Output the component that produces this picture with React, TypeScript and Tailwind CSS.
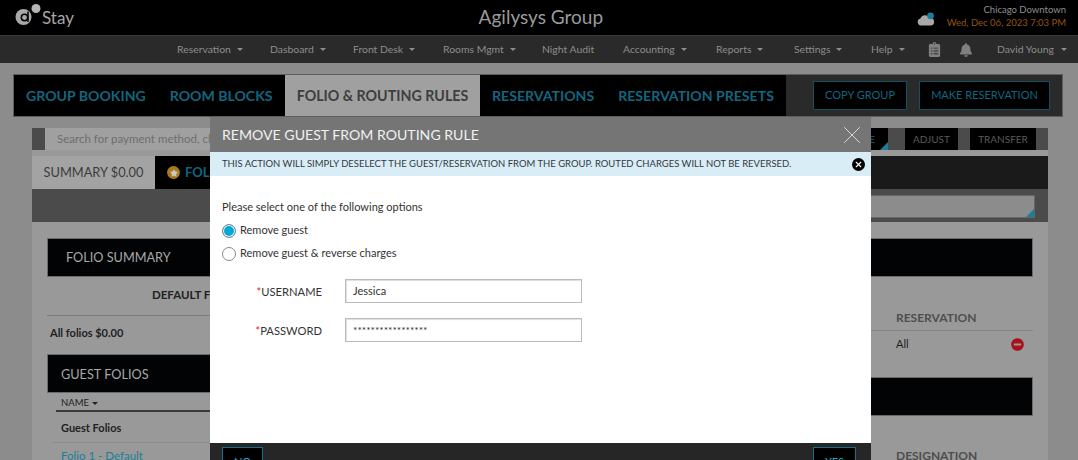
import { X } from "lucide-react";
import { FaBell, FaClipboardList, FaMinusCircle, FaStar } from "react-icons/fa";

const navItems = [
  { label: "Reservation", caret: true, width: "w-[93px]" },
  { label: "Dasboard", caret: true, width: "w-[83px]" },
  { label: "Front Desk", caret: true, width: "w-[90px]" },
  { label: "Rooms Mgmt", caret: true, width: "w-[99px]" },
  { label: "Night Audit", caret: false, width: "w-[81px]" },
  { label: "Accounting", caret: true, width: "w-[93px]" },
  { label: "Reports", caret: true, width: "w-[78px]" },
  { label: "Settings", caret: true, width: "w-[77px]" },
  { label: "Help", caret: true, width: "w-[56px]" },
];

function Caret({ className = "border-t-[#a0a0a0]" }: { className?: string }) {
  return <span className={`inline-block w-0 h-0 border-x-[3px] border-x-transparent border-t-[3px] ${className}`} />;
}

function Logo() {
  return (
    <svg width="27" height="30" viewBox="0 0 27 30" className="shrink-0">
      <circle cx="8.5" cy="14" r="8" fill="#a8a8a8" />
      <circle cx="9.5" cy="14.5" r="3.2" fill="none" stroke="#000" strokeWidth="1.5" />
      <path d="M13 8.5v10.5" stroke="#000" strokeWidth="1.5" />
      <circle cx="21" cy="5.5" r="4.5" fill="#b5b5b5" />
    </svg>
  );
}

function WeatherIcon() {
  return (
    <svg width="18" height="14" viewBox="0 0 18 14" className="shrink-0">
      <path d="M4 13.5a3.5 3.5 0 0 1-.6-6.9A5 5 0 0 1 12.6 6a3.8 3.8 0 0 1 1.4 7.5z" fill="#a8a8a8" />
      <circle cx="13.5" cy="3.8" r="3.4" fill="#1b7f9c" />
    </svg>
  );
}

function BlackBand({ title, className = "" }: { title?: string; className?: string }) {
  return (
    <div className={`h-[39px] shrink-0 bg-[#020305] border border-[#6a6a6a] flex items-center text-[#a8a8a8] text-[12.7px] ${className}`}>
      {title}
    </div>
  );
}

export default function App() {
  return (
    <div className="relative w-[1078px] h-[460px] overflow-hidden bg-[#8c8c8c] font-['Lato','Open_Sans',sans-serif]">
      {/* top header */}
      <header className="h-[36px] bg-black border-b border-[#3a3a3a] flex items-center pl-[15px] pr-[12px]">
        <div className="w-[330px] flex items-center text-[#a6a6a6] text-[17px]">
          <Logo />
          <span>Stay</span>
        </div>
        <div className="flex-1 text-center text-[#9a9a9a] text-[19px] pr-[180px]">Agilysys Group</div>
        <div className="mr-[12px] mt-[3px]">
          <WeatherIcon />
        </div>
        <div className="text-right text-[9.5px] leading-[13px] -mt-[4px]">
          <div className="text-[#8f8f8f]">Chicago Downtown</div>
          <div className="text-[#96540f]">Wed, Dec 06, 2023 7:03 PM</div>
        </div>
      </header>

      {/* main nav */}
      <nav className="h-[27px] bg-[#2a2a2a] flex items-center pl-[177px] text-[#8d8d8d] text-[10.4px]">
        {navItems.map((item) => (
          <div key={item.label} className={`${item.width} flex items-center gap-[6px] shrink-0`}>
            <span>{item.label}</span>
            {item.caret && <Caret className="border-t-[#8d8d8d]" />}
          </div>
        ))}
        <FaClipboardList className="text-[#808080] text-[15px] shrink-0" />
        <FaBell className="text-[#808080] text-[14px] ml-[17px] shrink-0" />
        <div className="flex items-center gap-[7px] ml-[24px] whitespace-nowrap">
          <span>David Young</span>
          <Caret className="border-t-[#8d8d8d]" />
        </div>
      </nav>

      {/* section tabs */}
      <div className="mt-[11px] ml-[13px] w-[1050px] h-[43px] flex border border-[#5c5c5c] bg-[#2a2a2a] whitespace-nowrap">
        <div className="w-[271px] bg-black flex items-center pl-[12px] gap-[24px] text-[#12667f] text-[14.1px] font-bold">
          <span>GROUP BOOKING</span>
          <span>ROOM BLOCKS</span>
        </div>
        <div className="w-[195px] bg-[#a0a0a0] flex items-center justify-center text-[#3e3e3e] text-[14.25px] font-bold">
          FOLIO &amp; ROUTING RULES
        </div>
        <div className="w-[306px] bg-black flex items-center pl-[12px] gap-[24px] text-[#12667f] text-[14.1px] font-bold">
          <span>RESERVATIONS</span>
          <span>RESERVATION PRESETS</span>
        </div>
        <div className="flex-1 flex items-center pl-[27px] gap-[12px] text-[#12667f] text-[11px]">
          <div className="w-[94px] h-[29px] bg-black border border-[#12505f] flex items-center justify-center">COPY GROUP</div>
          <div className="w-[131px] h-[29px] bg-black border border-[#12505f] flex items-center justify-center">MAKE RESERVATION</div>
        </div>
      </div>

      {/* folio panel */}
      <main className="ml-[32px] mt-[11px] w-[1016px] h-[340px] bg-[#999999] flex flex-col">
        <div className="h-[22px] bg-[#4b4b4b] flex pl-[13px] pr-[12px] shrink-0">
          <div className="w-[600px] bg-[#a0a0a0] text-[#6e6e6e] text-[11.5px] pl-[12px] flex items-center whitespace-nowrap overflow-hidden">
            Search for payment method, charge
          </div>
          <div className="ml-auto flex text-[#5a5a5a] text-[10px]">
            <div className="relative w-[68px] bg-black overflow-hidden flex items-center justify-end pr-[13px] text-[#12667f]">
              <span>CHARGE</span>
              <span className="absolute right-0 bottom-0 w-0 h-0 border-l-[8px] border-l-transparent border-b-[8px] border-b-[#1a7f9c]" />
            </div>
            <div className="ml-[17px] w-[53px] bg-black flex items-center justify-center">ADJUST</div>
            <div className="ml-[12px] w-[66px] bg-black flex items-center justify-center">TRANSFER</div>
          </div>
        </div>
        <div className="mt-[6px] h-[33px] flex bg-[#1a1a1a] shrink-0">
          <div className="w-[123px] bg-[#a3a3a3] text-[#3c3c3c] text-[12.8px] pt-[1px] flex items-center justify-center">SUMMARY $0.00</div>
          <div className="flex-1 bg-[#1a1a1a] flex items-center">
            <div className="w-[80px] h-full bg-black flex items-center pl-[12px] gap-[5px] text-[#12667f] text-[13px] font-bold">
              <span className="w-[13px] h-[13px] rounded-full bg-[#a87a1a] flex items-center justify-center shrink-0">
                <FaStar className="text-[#c9c9c9] text-[8px]" />
              </span>
              <span>FOLIO</span>
            </div>
          </div>
        </div>
        <div className="h-[33px] bg-[#4b4b4b] pt-[6px] pr-[13px] flex justify-end shrink-0">
          <div className="relative w-[400px] h-[23px] bg-[#8c8c8c] border border-[#666] overflow-hidden">
            <span className="absolute right-0 bottom-0 w-0 h-0 border-l-[8px] border-l-transparent border-b-[8px] border-b-[#1a7f9c]" />
          </div>
        </div>
        <div className="flex-1 px-[15px] pt-[16px] text-[#222] text-[11px] flex min-h-0">
          <div className="w-[400px] flex flex-col shrink-0">
            <BlackBand title="FOLIO SUMMARY" className="pl-[18px]" />
            <div className="h-[39px] shrink-0 flex items-center border-b border-[#7a7a7a] font-bold text-[11.5px] pl-[105px] pb-[2px]">DEFAULT FOLIO</div>
            <div className="h-[38px] shrink-0 flex items-start pt-[9px] pl-[3px] font-bold text-[11px]">All folios $0.00</div>
            <BlackBand title="GUEST FOLIOS" className="pl-[13px] pt-[3px]" />
            <div className="h-[19px] shrink-0 ml-[9px] border-b-2 border-[#3a3a3a] flex items-center gap-[3px] pl-[5px] pt-[4px] text-[9.5px] text-[#222]">
              NAME <Caret className="border-t-[#222]" />
            </div>
            <div className="h-[31px] shrink-0 ml-[5px] border-b border-[#8c8c8c] flex items-center pl-[9px] pt-[3px] font-bold text-[11px]">Guest Folios</div>
            <div className="h-[26px] shrink-0 ml-[5px] flex items-center pl-[9px] text-[#1c7f97] text-[11.5px]">Folio 1 - Default</div>
          </div>
          <div className="flex-1 flex flex-col">
            <BlackBand className="border-l-0" />
            <div className="h-[54px] shrink-0 border-b border-[#858585] flex items-end pb-[3px] pl-[449px] font-bold text-[12px] text-[#4e4e4e]">
              RESERVATION
            </div>
            <div className="h-[24px] shrink-0 flex items-center justify-between pl-[449px] pt-[3px] text-[11px]">
              <span>All</span>
              <FaMinusCircle className="text-[#a8111c] text-[13px] mr-[9px]" />
            </div>
            <BlackBand className="border-l-0 mt-[22px]" />
            <div className="h-[49px] shrink-0 flex items-end pl-[449px] font-bold text-[12px] text-[#4e4e4e]">DESIGNATION</div>
          </div>
        </div>
      </main>

      {/* modal */}
      <div className="absolute left-[210px] top-[117px] w-[661px] h-[360px] flex flex-col">
        <div className="h-[35px] bg-[#757575] flex items-center pl-[12px] pr-[4px] text-[#f0f0f0] text-[14.1px]">
          <span>REMOVE GUEST FROM ROUTING RULE</span>
          <X className="ml-auto w-[30px] h-[30px] text-[#d8d8d8]" strokeWidth={0.8} />
        </div>
        <div className="h-[24px] bg-[#d9edf7] flex items-center pl-[12px] pr-[6px] text-[#33383c] text-[9.47px]">
          <span>THIS ACTION WILL SIMPLY DESELECT THE GUEST/RESERVATION FROM THE GROUP. ROUTED CHARGES WILL NOT BE REVERSED.</span>
          <span className="ml-auto w-[13px] h-[13px] rounded-full bg-black flex items-center justify-center">
            <X className="w-[9px] h-[9px] text-white" strokeWidth={3} />
          </span>
        </div>
        <div className="h-[267px] bg-white pl-[12px] pt-[24px] text-[#333] text-[11px]">
          <div className="h-[14px] leading-[14px]">Please select one of the following options</div>
          <div className="mt-[9px] flex items-center gap-[4px] h-[15px]">
            <span className="w-[14px] h-[14px] rounded-full border border-[#888] bg-[#00a8d6] shadow-[inset_0_0_0_1px_#fff] shrink-0" />
            <span>Remove guest</span>
          </div>
          <div className="mt-[8px] flex items-center gap-[4px] h-[15px]">
            <span className="w-[14px] h-[14px] rounded-full border border-[#888] bg-white shrink-0" />
            <span>Remove guest &amp; reverse charges</span>
          </div>
          <div className="mt-[18px] flex items-center h-[24px]">
            <label className="w-[100px] pt-[2px] text-right text-[11.2px]"><span className="text-[#e0202a]">*</span>USERNAME</label>
            <div className="ml-[23px] w-[237px] h-[24px] border border-[#bbb] shadow-[inset_1px_1px_1px_#ddd] pl-[7px] flex items-center">Jessica</div>
          </div>
          <div className="mt-[15px] flex items-center h-[24px]">
            <label className="w-[100px] pt-[2px] text-right text-[11.2px]"><span className="text-[#e0202a]">*</span>PASSWORD</label>
            <div className="ml-[23px] w-[237px] h-[24px] border border-[#bbb] shadow-[inset_1px_1px_1px_#ddd] pl-[7px] pt-[2px] flex items-center text-[10.3px]">*****************</div>
          </div>
        </div>
        <div className="flex-1 bg-[#262626] flex justify-between pl-[12px] pr-[15px] pt-[4px] text-[#2aa5c5] text-[11px]">
          <div className="w-[41px] h-[30px] bg-black border border-[#1a6f86] flex items-center justify-center">NO</div>
          <div className="w-[43px] h-[30px] bg-black border border-[#1a6f86] flex items-center justify-center">YES</div>
        </div>
      </div>
    </div>
  );
}
